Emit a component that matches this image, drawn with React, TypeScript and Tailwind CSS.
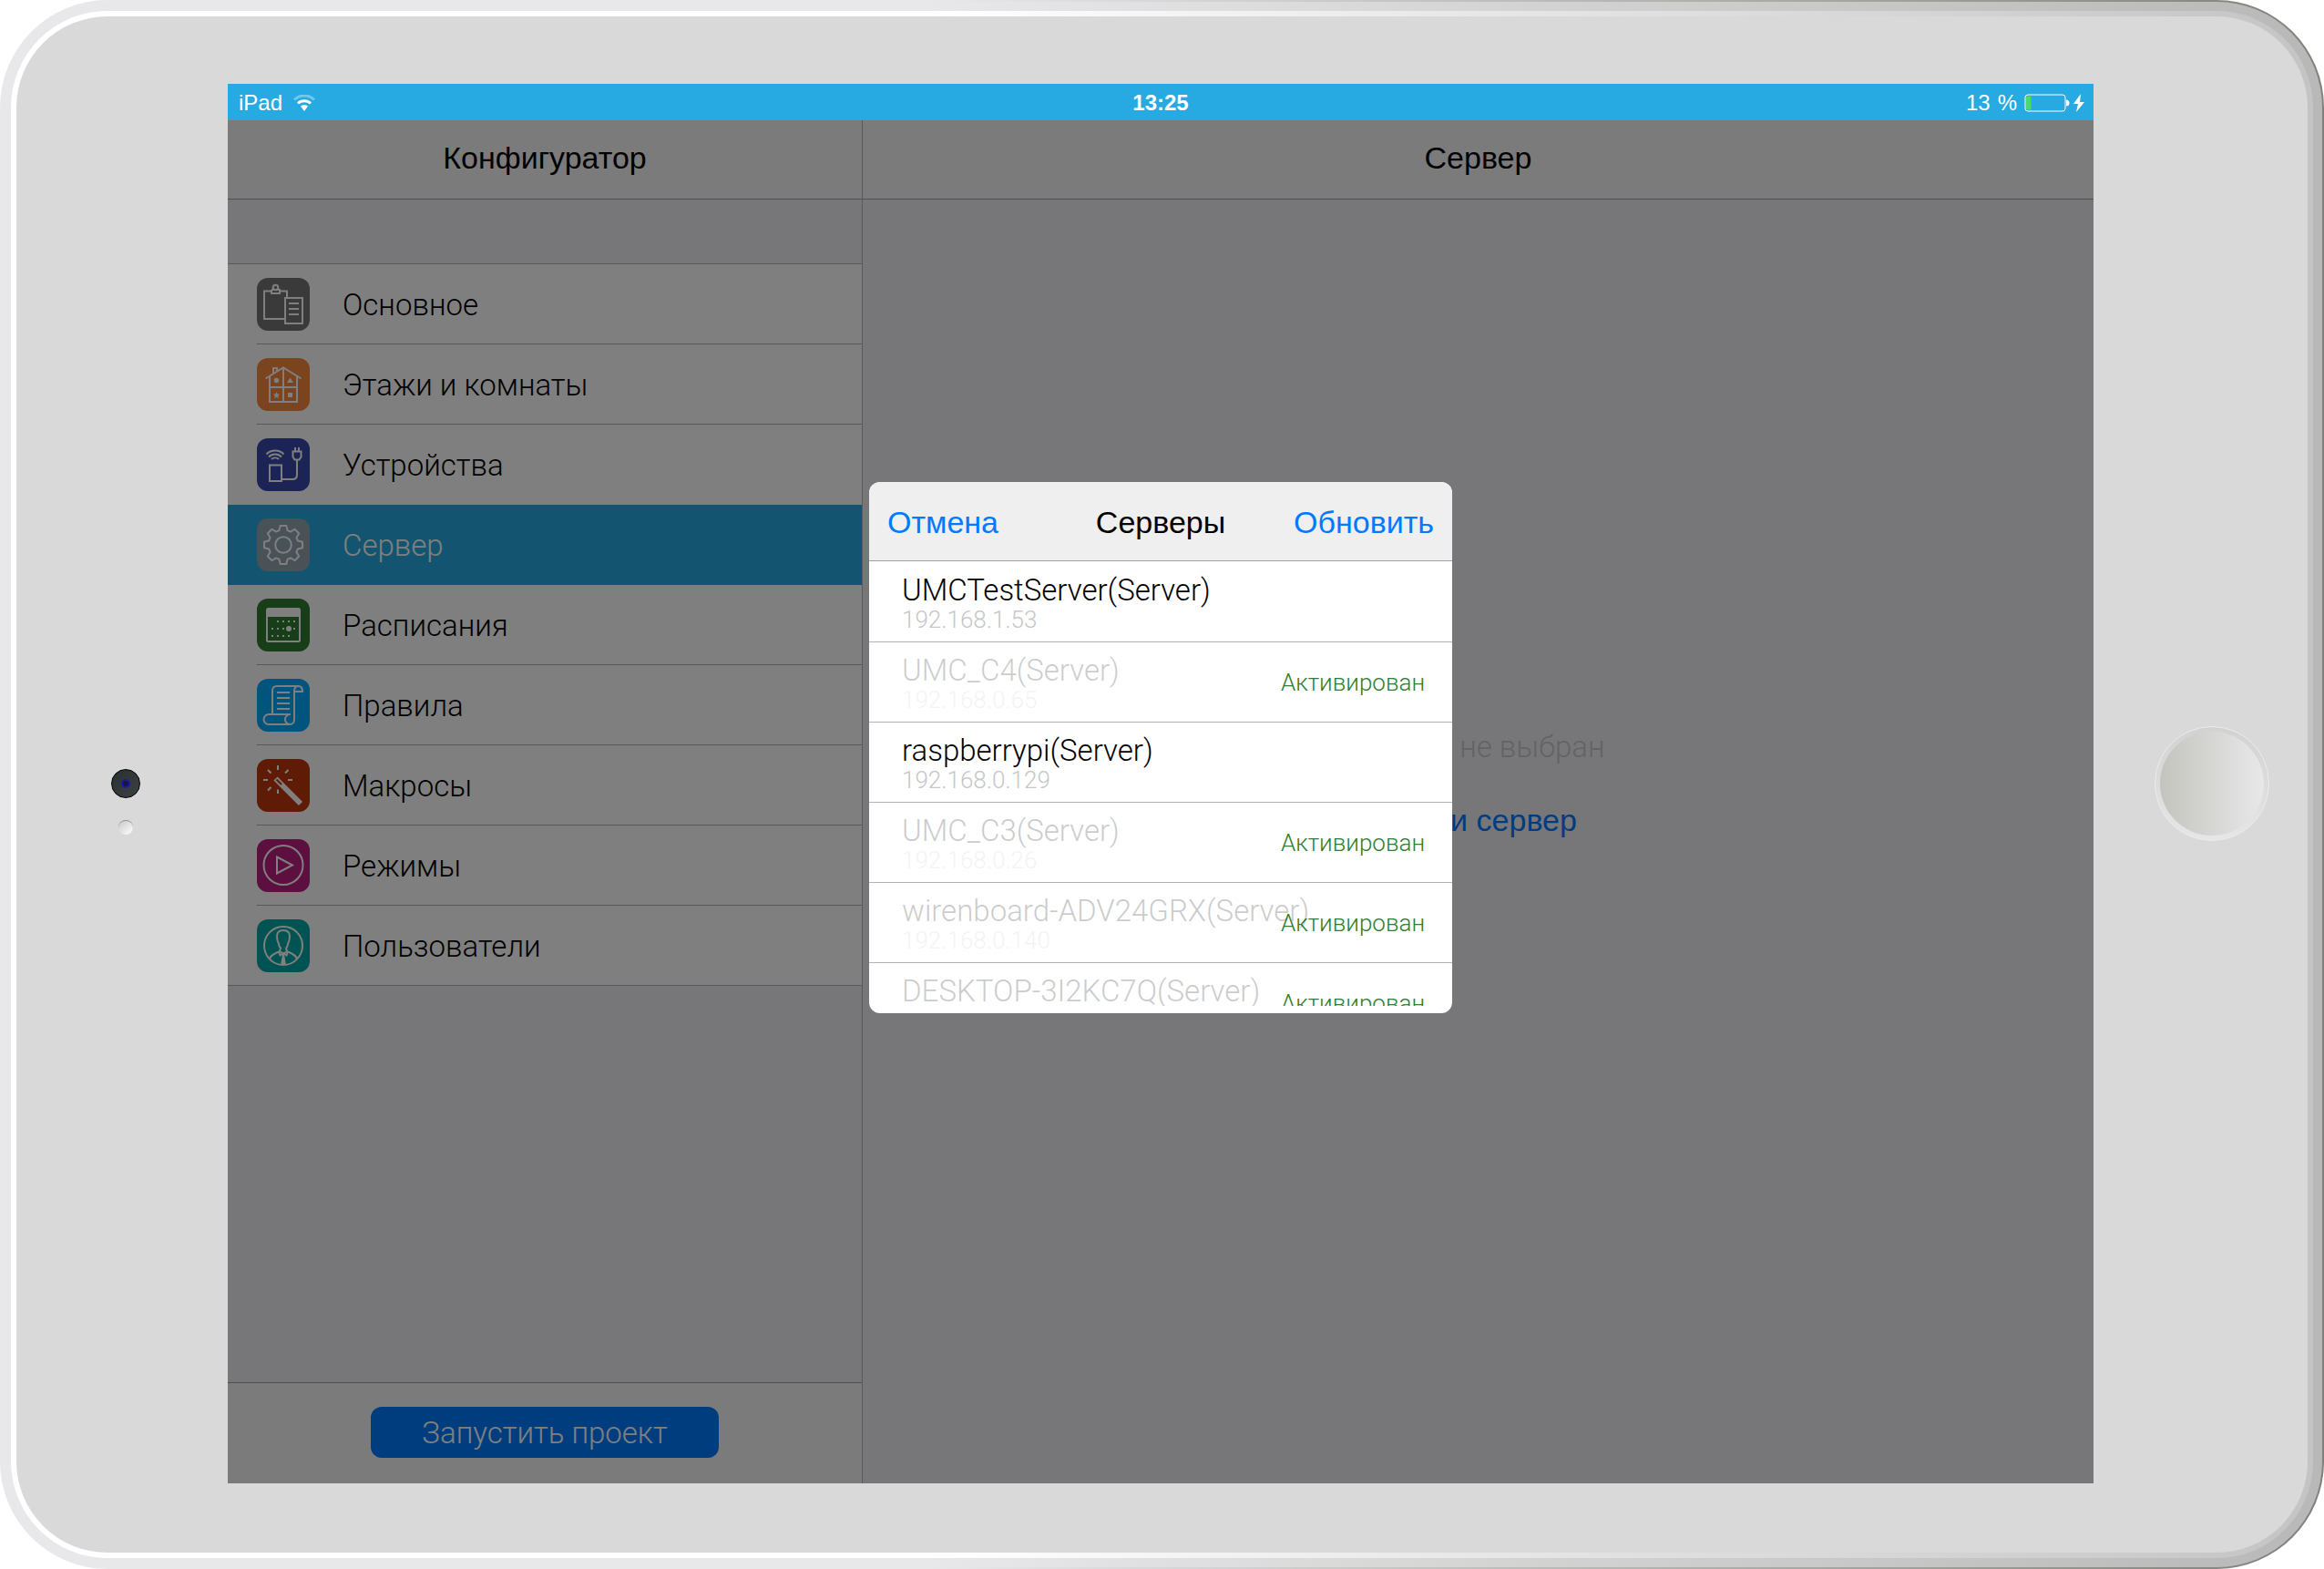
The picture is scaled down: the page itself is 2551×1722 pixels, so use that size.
import React from 'react';
import clsx from 'clsx';

interface MenuItem {
  label: string;
  tile: string;
  icon: React.ReactNode;
  active?: boolean;
}

interface Server {
  name: string;
  ip: string;
  activated: boolean;
}

const polar = (radius: number, deg: number) => {
  const rad = (deg * Math.PI) / 180;
  return `${(29 + radius * Math.sin(rad)).toFixed(2)} ${(29 - radius * Math.cos(rad)).toFixed(2)}`;
};

const gearPath =
  'M' +
  Array.from({ length: 8 }, (_, i) => i * 45)
    .map((a) => [polar(16.5, a - 16), polar(21.3, a - 9), polar(21.3, a + 9), polar(16.5, a + 16)].join('L'))
    .join('L') +
  'Z';

const menu: MenuItem[] = [
  {
    label: 'Основное',
    tile: 'bg-[#757575]',
    icon: (
      <>
        <path d="M31 45H8V14.500h8M25 14.500h8V22" />
        <path d="M16 13h2.500M22.500 13H25v4H16v-4" />
        <circle cx="20.500" cy="10.500" r="2.800" />
        <path d="M31 22h19v28H31zM35 28h11M35 34h11M35 40h11" />
      </>
    ),
  },
  {
    label: 'Этажи и комнаты',
    tile: 'bg-[#f6873c]',
    icon: (
      <>
        <path d="M9.500 22.500 29 10.500l19.500 12M14 20v28h30V20M29 10.500V48M14 32h30M18 17v-6h4v3.500" />
        <g className="fill-white" stroke="none">
          <circle cx="21.500" cy="24.500" r="2.700" />
          <path d="m36.500 21.500 3.500 5.500h-7zM34 38h5v5h-5z" />
          <path d="m21.500 37 1 2.500 2.700.2-2 1.800.7 2.700-2.400-1.500-2.400 1.500.7-2.700-2-1.800 2.700-.2z" />
        </g>
      </>
    ),
  },
  {
    label: 'Устройства',
    tile: 'bg-[#3949ab]',
    icon: (
      <>
        <path d="M10.500 17.500a13.500 13.500 0 0 1 19 0M13 20.500a9.800 9.800 0 0 1 14 0M16 23a6 6 0 0 1 8 0" />
        <path d="M14 29.500h13V47H14zM27 45h12q5 0 5-5V23.500M39.500 14.500h9v6l-2 3h-5l-2-3zM42 10v4.500M46 10v4.500" />
      </>
    ),
  },
  {
    label: 'Сервер',
    tile: 'bg-[#90a4ae]',
    active: true,
    icon: (
      <>
        <path d={gearPath} strokeLinejoin="round" />
        <circle cx="29" cy="29" r="8.800" />
      </>
    ),
  },
  {
    label: 'Расписания',
    tile: 'bg-[#2e7d32]',
    icon: (
      <>
        <rect x="11" y="11" width="36" height="36" rx="1.500" />
        <path d="M11 11h36v9H11z" className="fill-white" stroke="none" />
        <path d="M22 25h2M28 25h2M34 25h2M40 25h2M16 33h2M22 33h2M28 33h2M40 33h2M16 41h2M22 41h2M28 41h2M34 41h2" />
        <circle cx="35" cy="33" r="3" className="fill-white" stroke="none" />
      </>
    ),
  },
  {
    label: 'Правила',
    tile: 'bg-[#00a9fb]',
    icon: (
      <>
        <path d="M17 39V13q0-5 5-5h23.500q4.500 0 4.500 6H41q0-6 4.500-6M41 14v30.500q0 5.500-5 5.500H13a5.500 5.500 0 0 1 0-11h24" />
        <path d="M37 39a5.500 5.500 0 1 0-1 11M22 15h14M22 21h14M22 27h14M22 33h14" />
      </>
    ),
  },
  {
    label: 'Макросы',
    tile: 'bg-[#bf360c]',
    icon: (
      <>
        <path d="M23 7v5M23 33.500v4.500M7 23h5M34 23h5M12 12l3.500 3.500M34.500 12 31 15.500M12 34.500l3.500-3.500" />
        <path d="m20.500 21.500 27.500 27.500" strokeWidth="6" />
        <path d="m21.500 22.500 5.500 5.500" className="stroke-[#bf360c]" />
      </>
    ),
  },
  {
    label: 'Режимы',
    tile: 'bg-[#bb1e80]',
    icon: (
      <>
        <circle cx="29" cy="28.500" r="21.500" />
        <path d="M22 19.500v18l17-9z" />
      </>
    ),
  },
  {
    label: 'Пользователи',
    tile: 'bg-[#00a6a6]',
    icon: (
      <>
        <circle cx="29" cy="29" r="21" />
        <path
          strokeLinejoin="round"
          d="M22.500 23c-1.500-8 1-11 6.500-11s8 3 6.500 11c-.5 2-1.300 3-1.500 4 0 2-1 3.500-2 4.500l1 3.500-4 3-4-3 1-3.500c-1-1-2-2.500-2-4.500-.2-1-1-2-1.500-4z"
        />
        <path d="M14 43.500c1-4 5-6 10-8M44 43.500c-1-4-5-6-10-8M24 35.500l1.500 4 3.500-2.500 3.500 2.500 1.500-4" />
        <path d="m28 38-2 12h6l-2-12z" className="fill-white" stroke="none" />
      </>
    ),
  },
];

const servers: Server[] = [
  { name: 'UMCTestServer(Server)', ip: '192.168.1.53', activated: false },
  { name: 'UMC_C4(Server)', ip: '192.168.0.65', activated: true },
  { name: 'raspberrypi(Server)', ip: '192.168.0.129', activated: false },
  { name: 'UMC_C3(Server)', ip: '192.168.0.26', activated: true },
  { name: 'wirenboard-ADV24GRX(Server)', ip: '192.168.0.140', activated: true },
  { name: 'DESKTOP-3I2KC7Q(Server)', ip: '', activated: true },
];

const StatusBar: React.FC = () => (
  <div className="grid h-10 shrink-0 grid-cols-3 items-center bg-[#27aae1] px-2.5 pt-px text-2xl text-white">
    <div className="flex items-center gap-3 pl-0.5">
      <span>iPad</span>
      <svg viewBox="0 0 24 18" className="h-[18px] w-6" fill="none" stroke="white" strokeWidth="3">
        <path d="M1 5.500a15.500 15.500 0 0 1 22 0" opacity=".35" />
        <path d="M5 9.500a10 10 0 0 1 14 0" />
        <path d="M8 12.500a6 6 0 0 1 8 0L12 18z" fill="white" stroke="none" />
      </svg>
    </div>
    <span className="text-center font-bold">13:25</span>
    <div className="flex items-center justify-end gap-2">
      <span className="flex gap-2">
        <span>13</span>
        <span>%</span>
      </span>
      <svg viewBox="0 0 50 20" className="h-5 w-[50px]">
        <rect x="1" y="1" width="44" height="18" rx="3" fill="none" stroke="white" />
        <rect x="2" y="2.500" width="5.500" height="15" rx="1" fill="#4cd964" />
        <path d="M46 6.500q3.500 0 3.500 3.500t-3.500 3.500z" fill="white" />
      </svg>
      <svg viewBox="0 0 12 20" className="-ml-1 h-5 w-3" fill="white">
        <path d="M8 0 0 11h5L3 20l9-11H7z" />
      </svg>
    </div>
  </div>
);

const Sidebar: React.FC = () => (
  <aside className="flex w-[697px] shrink-0 flex-col border-r border-[#b2b2b2] bg-[#efeff4]">
    <h1 className="flex h-[87px] items-center justify-center border-b border-[#a0a0a0] bg-[#f7f7f7] pb-1 text-[34px]">
      Конфигуратор
    </h1>
    <div className="h-[71px] border-b border-[#b2b2b2]" />
    <ul className="bg-white">
      {menu.map((item, i) => {
        const last = i === menu.length - 1;
        const plain = item.active || menu[i + 1]?.active;
        return (
          <li key={item.label} className={clsx(item.active && 'bg-[#27aae1]', last ? 'border-b border-[#b2b2b2]' : 'pl-8')}>
            <button
              type="button"
              className={clsx(
                'flex w-full items-center gap-9 text-left font-[Roboto,sans-serif] text-[33px] font-light',
                last ? 'h-[87px] pl-8' : 'h-[88px] border-b',
                plain ? 'border-transparent' : 'border-[#b2b2b2]',
                item.active && 'text-white',
              )}
            >
              <span className={clsx('rounded-xl', item.tile)}>
                <svg viewBox="0 0 58 58" className="size-[58px]" fill="none" stroke="white" strokeWidth="2">
                  {item.icon}
                </svg>
              </span>
              <span className="pt-0.5">{item.label}</span>
            </button>
          </li>
        );
      })}
    </ul>
    <div className="mt-auto flex h-[111px] items-center justify-center border-t border-[#a0a0a0] bg-[#f7f7f7] pb-0.5">
      <button
        type="button"
        className="h-14 w-[382px] rounded-xl bg-[#007aff] pt-0.5 font-[Roboto,sans-serif] text-[33px] font-light text-white"
      >
        Запустить проект
      </button>
    </div>
  </aside>
);

const ServerPane: React.FC = () => (
  <main className="flex flex-1 flex-col bg-[#efeff4]">
    <h2 className="flex h-[87px] items-center justify-center border-b border-[#a0a0a0] bg-[#f7f7f7] pb-1 text-[34px]">
      Сервер
    </h2>
    <div className="flex flex-1 flex-col items-center justify-center gap-10 pb-[128px] leading-10">
      <p className="font-[Roboto,sans-serif] text-[33px] font-light text-[#c7c7c7]">Сервер не выбран</p>
      <button type="button" className="text-[34px] text-[#007aff]">
        Найти сервер
      </button>
    </div>
  </main>
);

const ServerDialog: React.FC = () => (
  <div role="dialog" aria-label="Серверы" className="w-[640px] overflow-hidden rounded-xl bg-white pb-2">
    <div className="flex h-[87px] items-center justify-between border-b border-[#a0a0a0] bg-[#efefef] px-5 pt-0.5 text-[34px]">
      <button type="button" className="flex-1 text-left text-[#007aff]">
        Отмена
      </button>
      <h3>Серверы</h3>
      <button type="button" className="flex-1 text-right text-[#007aff]">
        Обновить
      </button>
    </div>
    <ul className="h-[488px] overflow-hidden pt-px font-[Roboto,sans-serif] font-light">
      {servers.map((server) => (
        <li key={server.name}>
          <button
            type="button"
            disabled={server.activated}
            className="flex h-[88px] w-full items-center border-b border-[#b2b2b2] pt-0.5 pr-[30px] pl-9 text-left"
          >
            <span className={clsx('flex w-0 flex-1 flex-col whitespace-nowrap', server.activated && 'opacity-20')}>
              <span className="text-[33px] leading-9">{server.name}</span>
              <span className="min-h-7 text-[26px] leading-7 text-[#c7c7c7]">{server.ip}</span>
            </span>
            {server.activated && <span className="text-[26px] text-[#2e7d32]">Активирован</span>}
          </button>
        </li>
      ))}
    </ul>
  </div>
);

const App: React.FC = () => {
  return (
    <div className="h-screen bg-white font-['Liberation_Sans',Arial,sans-serif] text-black">
      <div className="h-full rounded-[118px] bg-linear-to-r from-[#e8e8ea] from-40% via-[#9b9b96] via-85% to-[#80807c] p-0.5">
        <div className="h-full rounded-[116px] bg-linear-to-r from-[#e8e8ea] from-40% to-[#b8b8b8] p-2.5">
          <div className="h-full rounded-[106px] bg-linear-to-r from-white from-40% to-[#c4c4c4] p-1.5">
            <div className="flex h-full rounded-[100px] bg-[#d9d9d9] pt-[74px] pb-[76px]">
              <div className="flex w-[232px] shrink-0 flex-col items-center justify-center gap-6 pt-10 pl-2">
                <span className="flex size-8 items-center justify-center rounded-full border border-black bg-linear-to-br from-[#2a3032] to-[#3c4244]">
                  <span className="size-2.5 rounded-full border-2 border-[#1c1a9a] bg-[#15154a]" />
                </span>
                <span className="size-4 rounded-full border-t border-[#8f8f8f] bg-linear-to-br from-[#c9c9c9] to-white" />
              </div>

              <div className="flex flex-1 flex-col">
                <StatusBar />
                <div className="relative flex flex-1">
                  <Sidebar />
                  <ServerPane />
                  <div className="absolute inset-0 flex items-center justify-center bg-black/50 pb-[119px]">
                    <ServerDialog />
                  </div>
                </div>
              </div>

              <div className="flex w-[235px] shrink-0 items-center justify-center pl-6">
                <button
                  type="button"
                  aria-label="Домой"
                  className="size-[126px] rounded-full border border-[#ececec] bg-linear-to-b from-[#d2d2d2] to-[#e6e6e8] p-[5px]"
                >
                  <span className="block size-full rounded-full bg-linear-to-r from-[#c4c4be] to-[#e8e8ea]" />
                </button>
              </div>
            </div>
          </div>
        </div>
      </div>
    </div>
  );
};

export default App;
